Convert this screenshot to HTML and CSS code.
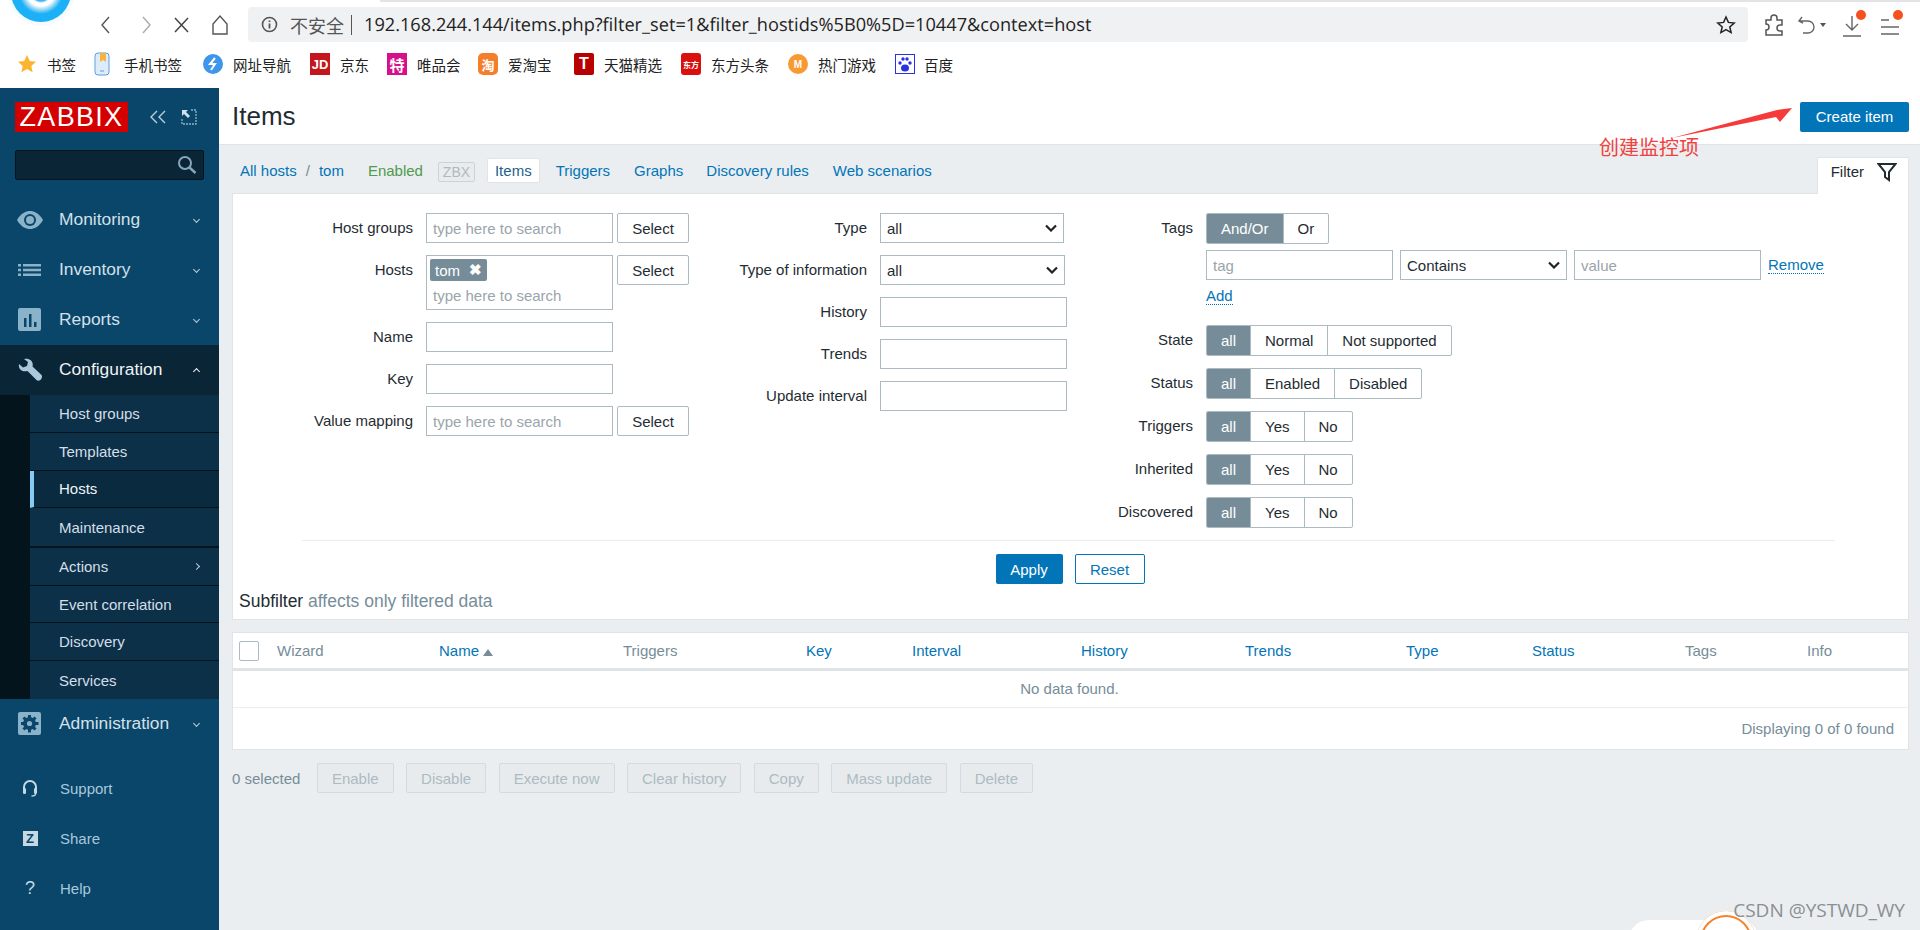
FILE: index.html
```html
<!DOCTYPE html>
<html>
<head>
    <meta charset="utf-8">
    <title>Items</title>
    <link rel="stylesheet" href="styles.css">
</head>
<body>
    <div class="browser">
        <div class="tabstrip"><span class="tab-grey"></span></div>
        <div class="favicon"></div>
        <div class="toolbar">
            <svg class="tb-icon back" width="18" height="24" viewBox="0 0 18 24"><path d="M12 4 5 12l7 8" fill="none" stroke="#555" stroke-width="1.4"/></svg>
            <svg class="tb-icon forward" width="18" height="24" viewBox="0 0 18 24"><path d="M6 4l7 8-7 8" fill="none" stroke="#aaa" stroke-width="1.4"/></svg>
            <svg class="tb-icon stop" width="18" height="24" viewBox="0 0 18 24"><path d="M2 5l13 14M15 5 2 19" fill="none" stroke="#444" stroke-width="1.5"/></svg>
            <svg class="tb-icon home" width="20" height="24" viewBox="0 0 20 24"><path d="M3 11 10 3l7 8v10H3z" fill="none" stroke="#555" stroke-width="1.4"/></svg>
            <div class="address">
                <svg class="info-icon" width="17" height="17" viewBox="0 0 17 17"><circle cx="8.5" cy="8.5" r="7" fill="none" stroke="#555" stroke-width="1.6"/><path d="M8.5 7.5v5M8.5 4.5v1.6" stroke="#555" stroke-width="1.8"/></svg>
                <span class="insecure">不安全</span>
                <span class="addr-sep"></span>
                <span class="url">192.168.244.144/items.php?filter_set=1&amp;filter_hostids%5B0%5D=10447&amp;context=host</span>
                <svg class="addr-star" width="20" height="20" viewBox="0 0 20 20"><path d="M10 2l2.4 5.4 5.8.6-4.4 3.9 1.3 5.7L10 14.7l-5.1 2.9 1.3-5.7L1.8 8l5.8-.6z" fill="none" stroke="#222" stroke-width="1.5"/></svg>
            </div>
            <div class="tb-right">
                <svg width="22" height="24" viewBox="0 0 22 24"><path d="M8 5a3 3 0 0 1 6 0v2h5v5h-2a3 3 0 0 0 0 6h2v4H3v-5a3 3 0 0 0 0-6V7h5z" fill="none" stroke="#555" stroke-width="1.5"/></svg>
                <svg class="undo" width="20" height="24" viewBox="0 0 20 24"><path d="M5 4 2 8l4 2M2 8h9a6 6 0 0 1 0 12H6" fill="none" stroke="#666" stroke-width="1.4"/></svg>
                <span class="caret"></span>
                <div class="dl">
                    <svg width="22" height="26" viewBox="0 0 22 26"><path d="M11 4v14M5 12l6 6 6-6M2 24h18" fill="none" stroke="#666" stroke-width="1.4"/></svg>
                    <span class="dot"></span>
                </div>
                <div class="menu">
                    <svg width="22" height="26" viewBox="0 0 22 26"><path d="M3 8h8M3 15h18M3 22h18" fill="none" stroke="#666" stroke-width="1.5"/></svg>
                    <span class="dot"></span>
                </div>
            </div>
        </div>
        <div class="bookmarks">
            <span class="bm bm-star"><svg class="bm-ico" width="20" height="20" viewBox="0 0 20 20"><path d="M10 1l2.7 6 6.3.7-4.7 4.3 1.3 6.3L10 15l-5.600 3.300L5.700 12 1 7.700 7.300 7z" fill="#fbb42d"/></svg>书签</span>
            <span class="bm bm-phone"><svg class="bm-ico" width="18" height="24" viewBox="0 0 18 24"><rect x="2" y="1" width="14" height="22" rx="3" fill="#dcecfb" stroke="#5a9fe0"/><path d="M7 1h6v9l-3-2-3 2z" fill="#f5b342"/><path d="M7 19h4" stroke="#5a9fe0"/></svg>手机书签</span>
            <span class="bm bm-nav"><svg class="bm-ico" width="20" height="22" viewBox="0 0 20 22"><circle cx="10" cy="11" r="10" fill="#3d95ec"/><path d="M12 5 7 11h5l-4 6" fill="none" stroke="#fff" stroke-width="2"/></svg>网址导航</span>
            <span class="bm bm-jd"><span class="sq jd">JD</span>京东</span>
            <span class="bm bm-vip"><span class="sq te">特</span>唯品会</span>
            <span class="bm bm-tao"><span class="sq tao">淘</span>爱淘宝</span>
            <span class="bm bm-tm"><span class="sq tm">T</span>天猫精选</span>
            <span class="bm bm-df"><span class="sq df">东方</span>东方头条</span>
            <span class="bm bm-game"><span class="sq rm">M</span>热门游戏</span>
            <span class="bm"><svg class="bm-ico" width="20" height="20" viewBox="0 0 20 20"><rect x="0.500" y="0.500" width="19" height="19" fill="#fff" stroke="#2932e1"/><ellipse cx="10" cy="14" rx="4" ry="3.500" fill="#2932e1"/><circle cx="5" cy="9" r="1.700" fill="#2932e1"/><circle cx="15" cy="9" r="1.700" fill="#2932e1"/><circle cx="8" cy="5" r="1.700" fill="#2932e1"/><circle cx="12" cy="5" r="1.700" fill="#2932e1"/></svg>百度</span>
        </div>
    </div>

    <div class="app">
        <aside class="sidebar">
            <div class="logo-row">
                <div class="logo">ZABBIX</div>
                <svg class="collapse" width="18" height="16" viewBox="0 0 18 16"><path d="M8 2 2 8l6 6M16 2l-6 6 6 6" fill="none" stroke="#b8d0de" stroke-width="1.400"/></svg>
                <svg class="kiosk" width="16" height="16" viewBox="0 0 16 16"><path d="M10 1h5v14H1V9" fill="none" stroke="#8fb2c7" stroke-width="1.300" stroke-dasharray="2 1"/><path d="M1 1h6L5 3l4 4-2 2-4-4-2 2z" fill="#cfe0ea"/></svg>
            </div>
            <div class="search-box">
                <svg width="20" height="20" viewBox="0 0 20 20"><circle cx="8" cy="8" r="6" fill="none" stroke="#85a8bb" stroke-width="2"/><path d="M12.500 12.500 18.500 18" stroke="#85a8bb" stroke-width="2.400"/></svg>
            </div>
            <nav class="menu-main">
                <a class="nav-row">
                    <span class="nav-icon"><svg width="28" height="20" viewBox="0 0 28 20"><path d="M1 10C5 3 10 1 14 1s9 2 13 9c-4 7-9 9-13 9S5 17 1 10z" fill="#8ab2c9"/><circle cx="14" cy="10" r="6" fill="#0a466a"/><circle cx="14" cy="10" r="4" fill="#8ab2c9"/></svg></span>
                    <span class="nav-label">Monitoring</span><span class="chev down"></span>
                </a>
                <a class="nav-row">
                    <span class="nav-icon"><svg width="24" height="14" viewBox="0 0 24 14"><path d="M0 1h3v2.400H0zM0 5.800h3v2.400H0zM0 10.600h3V13H0zM5 1h18v2.400H5zM5 5.800h18v2.400H5zM5 10.600h18V13H5z" fill="#8ab2c9"/></svg></span>
                    <span class="nav-label">Inventory</span><span class="chev down"></span>
                </a>
                <a class="nav-row">
                    <span class="nav-icon"><svg width="24" height="24" viewBox="0 0 24 24"><rect width="23" height="23" rx="2" fill="#8ab2c9"/><path d="M6 10h2.500v9H6zM11 6h2.500v13H11zM16 14h2.500v5H16z" fill="#0a466a"/></svg></span>
                    <span class="nav-label">Reports</span><span class="chev down"></span>
                </a>
                <a class="nav-row active">
                    <span class="nav-icon"><svg width="24" height="24" viewBox="0 0 24 24"><path d="M1 6 5 9.500 9 8l1-4-4-3c5-1.500 10 2 8.500 7.500L23.500 17c1 1 .5 2.500-.5 4.500-2 1.500-3.500 1.500-4.500.5l-9-9C4.500 14.500 0 11 1 6z" fill="#a9c8dc"/></svg></span>
                    <span class="nav-label">Configuration</span><span class="chev up"></span>
                </a>
                <div class="submenu">
                    <a class="sub-row">Host groups</a>
                    <a class="sub-row">Templates</a>
                    <a class="sub-row current">Hosts</a>
                    <a class="sub-row thick">Maintenance</a>
                    <a class="sub-row">Actions<span class="chev right"></span></a>
                    <a class="sub-row">Event correlation</a>
                    <a class="sub-row">Discovery</a>
                    <a class="sub-row last">Services</a>
                </div>
                <a class="nav-row">
                    <span class="nav-icon"><svg width="24" height="24" viewBox="0 0 24 24"><rect width="23" height="23" rx="2" fill="#8ab2c9"/><path d="M11.500 3v17.500M3 11.500h17.500M5.500 5.500l12 12M17.500 5.500l-12 12" stroke="#0a466a" stroke-width="3"/><circle cx="11.500" cy="11.500" r="6.500" fill="#0a466a"/><circle cx="11.500" cy="11.500" r="2.600" fill="#8ab2c9"/></svg></span>
                    <span class="nav-label">Administration</span><span class="chev down"></span>
                </a>
            </nav>
            <div class="menu-user">
                <a class="user-row"><span class="user-icon"><svg width="16" height="18" viewBox="0 0 16 18"><path d="M2 10V8a6 6 0 0 1 12 0v2" fill="none" stroke="#c5d9e5" stroke-width="2"/><rect x="1" y="9" width="3" height="6" rx="1.300" fill="#c5d9e5"/><rect x="12" y="9" width="3" height="6" rx="1.300" fill="#c5d9e5"/><path d="M13.500 15c0 2-2 2-4 2" fill="none" stroke="#c5d9e5" stroke-width="1.300"/></svg></span>Support</a>
                <a class="user-row"><span class="user-icon"><span class="share-z">Z</span></span>Share</a>
                <a class="user-row"><span class="user-icon"><span class="help-q">?</span></span>Help</a>
            </div>
        </aside>

        <main class="content">
            <header class="page-head">
                <h1>Items</h1>
                <button class="btn-primary create">Create item</button>
            </header>

            <div class="host-nav">
                <a class="link first">All hosts</a>
                <span class="slash">/</span>
                <a class="link">tom</a>
                <span class="enabled">Enabled</span>
                <span class="zbx">ZBX</span>
                <a class="link tab-active">Items</a>
                <a class="link triggers">Triggers</a>
                <a class="link graphs">Graphs</a>
                <a class="link rules">Discovery rules</a>
                <a class="link web">Web scenarios</a>
                <div class="filter-tab">Filter
                    <svg width="20" height="20" viewBox="0 0 20 20"><path d="M1.500 2h17l-6.500 8v8l-4-3v-5z" fill="none" stroke="#1f2c33" stroke-width="2"/></svg>
                </div>
            </div>

            <section class="filter">
                <div class="filter-cols">
                    <div class="fcol fcol-1">
                        <label>Host groups</label>
                        <div class="with-select"><input class="w187" placeholder="type here to search"><button class="btn-alt">Select</button></div>
                        <label>Hosts</label>
                        <div class="with-select">
                            <div class="multi"><span class="chip">tom <b>✖</b></span><span class="ph">type here to search</span></div>
                            <button class="btn-alt">Select</button>
                        </div>
                        <label>Name</label>
                        <div><input class="w187"></div>
                        <label>Key</label>
                        <div><input class="w187"></div>
                        <label>Value mapping</label>
                        <div class="with-select"><input class="w187" placeholder="type here to search"><button class="btn-alt">Select</button></div>
                    </div>
                    <div class="fcol fcol-2">
                        <label>Type</label>
                        <div><select class="s184"><option>all</option></select></div>
                        <label>Type of information</label>
                        <div><select class="s185"><option>all</option></select></div>
                        <label>History</label>
                        <div><input class="w187"></div>
                        <label>Trends</label>
                        <div><input class="w187"></div>
                        <label>Update interval</label>
                        <div><input class="w187"></div>
                    </div>
                    <div class="fcol fcol-3">
                        <label>Tags</label>
                        <div class="seg"><span class="on">And/Or</span><span>Or</span></div>
                        <span></span>
                        <div class="tag-row">
                            <input class="w187" placeholder="tag">
                            <select class="s167"><option>Contains</option></select>
                            <input class="w187" placeholder="value">
                            <a class="dotted">Remove</a>
                        </div>
                        <span></span>
                        <div class="add-row"><a class="dotted">Add</a></div>
                        <label>State</label>
                        <div class="seg"><span class="on">all</span><span>Normal</span><span>Not supported</span></div>
                        <label>Status</label>
                        <div class="seg"><span class="on">all</span><span>Enabled</span><span>Disabled</span></div>
                        <label>Triggers</label>
                        <div class="seg"><span class="on">all</span><span>Yes</span><span>No</span></div>
                        <label>Inherited</label>
                        <div class="seg"><span class="on">all</span><span>Yes</span><span>No</span></div>
                        <label>Discovered</label>
                        <div class="seg"><span class="on">all</span><span>Yes</span><span>No</span></div>
                    </div>
                </div>
                <div class="filter-actions">
                    <button class="btn-primary apply">Apply</button>
                    <button class="btn-reset">Reset</button>
                </div>
                <div class="subfilter">Subfilter <span>affects only filtered data</span></div>
            </section>

            <section class="list">
                <div class="list-head">
                    <span><i class="check"></i></span>
                    <span class="muted">Wizard</span>
                    <a class="link">Name<i class="sort-up"></i></a>
                    <span class="muted">Triggers</span>
                    <a class="link">Key</a>
                    <a class="link">Interval</a>
                    <a class="link">History</a>
                    <a class="link">Trends</a>
                    <a class="link">Type</a>
                    <a class="link">Status</a>
                    <span class="muted">Tags</span>
                    <span class="muted">Info</span>
                </div>
                <div class="no-data">No data found.</div>
                <div class="list-foot">Displaying 0 of 0 found</div>
            </section>

            <div class="actions">
                <span class="selected">0 selected</span>
                <button>Enable</button>
                <button>Disable</button>
                <button>Execute now</button>
                <button>Clear history</button>
                <button>Copy</button>
                <button>Mass update</button>
                <button>Delete</button>
            </div>
        </main>
    </div>

    <!-- things pasted over the screenshot -->
    <svg class="arrow" width="130" height="40" viewBox="0 0 130 40"><path d="M0 30 105 2 120 0 108 14 104 9z" fill="#f63a3a"/></svg>
    <div class="note">创建监控项</div>
    <div class="float-pill"></div>
    <div class="float-ring"></div>
    <div class="watermark">CSDN @YSTWD_WY</div>
</body>
</html>
```

FILE: styles.css
```css
* {
    box-sizing: border-box;
}

html, body {
    margin: 0;
    height: 930px;
    overflow: hidden;
}

body {
    position: relative;
    background: #ebeef0;
    font-family: 'Liberation Sans', Arial, sans-serif;
    font-size: 15px;
    color: #1f2c33;
}

a {
    text-decoration: none;
}

/* browser chrome */
.browser {
    position: relative;
    height: 88px;
    background: #fff;
    overflow: hidden;
}

.tabstrip {
    display: flex;
    height: 2px;
    padding-left: 380px;
}

.tab-grey {
    flex: 1;
    background: #e4e4e4;
}

.favicon {
    position: absolute;
    left: 11px;
    top: -38px;
    width: 60px;
    height: 60px;
    border-radius: 50%;
    background: radial-gradient(circle at 50% 50%, #3fb4ee 0 9px, #fff 11px 14px, #8fd6f7 18px, #1cb0f6 22px);
    box-shadow: 0 0 0 4px #f6fbfd;
}

.toolbar {
    display: flex;
    align-items: center;
    height: 40px;
    padding: 5px 0 0 0;
}

.tb-icon {
    flex: none;
}

.back { margin-left: 97px; }
.forward { margin-left: 22px; }
.stop { margin-left: 18px; }
.home { margin-left: 19px; }

.address {
    display: flex;
    align-items: center;
    width: 1500px;
    height: 35px;
    margin-left: 18px;
    padding-left: 13px;
    background: #f0f1f3;
    border-radius: 4px;
    font-family: 'Noto Sans CJK SC', 'Liberation Sans', sans-serif;
}

.insecure {
    margin-left: 12px;
    font-size: 18px;
    color: #555;
}

.addr-sep {
    width: 1px;
    height: 20px;
    margin: 0 12px 0 7px;
    background: #555;
}

.url {
    font-family: 'Open Sans', sans-serif;
    font-size: 18.200px;
    text-rendering: geometricPrecision;
    color: #222;
    white-space: nowrap;
}

.addr-star {
    margin-left: auto;
    margin-right: 12px;
}

.tb-right {
    display: flex;
    align-items: center;
    margin-left: 15px;
}

.undo { margin-left: 12px; }

.caret {
    width: 0;
    height: 0;
    margin: 0 0 0 3px;
    border-left: 3px solid transparent;
    border-right: 3px solid transparent;
    border-top: 4px solid #555;
}

.dl, .menu {
    position: relative;
    height: 26px;
}

.dl { margin-left: 15px; }
.menu { margin-left: 15px; }

.dot {
    position: absolute;
    top: -2px;
    right: -3px;
    width: 10px;
    height: 10px;
    border-radius: 50%;
    background: #f4511e;
}

.bookmarks {
    display: flex;
    align-items: center;
    height: 44px;
    padding-left: 17px;
    font-family: 'Noto Sans CJK SC', sans-serif;
    font-size: 14.500px;
    color: #222;
}

.bm {
    display: flex;
    align-items: center;
    flex: none;
    white-space: nowrap;
}

.bm-star { width: 76px; }
.bm-phone { width: 110px; }
.bm-nav { width: 107px; }
.bm-jd { width: 77px; }
.bm-vip { width: 91px; }
.bm-tao { width: 96px; }
.bm-tm { width: 107px; }
.bm-df { width: 107px; }
.bm-game { width: 107px; }

.bm-star .bm-ico { margin-right: 10px; }
.bm-phone .bm-ico { margin-right: 13px; }
.bm-nav .bm-ico { margin-right: 10px; }

.bm-ico {
    flex: none;
    margin-right: 9px;
}

.sq {
    display: flex;
    align-items: center;
    justify-content: center;
    flex: none;
    width: 20px;
    height: 22px;
    margin-right: 10px;
    color: #fff;
    font-size: 12px;
    font-weight: bold;
}

.jd { background: #c4161c; font-family: 'Liberation Sans', sans-serif; font-size: 13px; }
.te { background: #d6108a; font-size: 15px; }
.tao { background: #f57e2b; border-radius: 5px; font-size: 13px; }
.tm { background: #b80000; border-radius: 2px; font-family: 'Liberation Sans', sans-serif; font-size: 16px; }
.df { background: #d9100e; border-radius: 3px; font-size: 8px; }
.rm { background: #f79a33; border-radius: 50%; height: 20px; font-size: 10px; font-family: 'Liberation Sans', sans-serif; }

/* page */
.app {
    display: flex;
    height: 842px;
}

.sidebar {
    display: flex;
    flex-direction: column;
    flex: none;
    width: 219px;
    background: #0a466a;
}

.logo-row {
    display: flex;
    align-items: center;
    height: 62px;
    padding: 0 0 4px 15px;
}

.logo {
    width: 113px;
    height: 30px;
    background: #d40000;
    color: #fff;
    font-size: 27px;
    line-height: 30px;
    letter-spacing: 1.300px;
    text-align: center;
}

.collapse { margin-left: 21px; }
.kiosk { margin-left: 14px; }

.search-box {
    display: flex;
    align-items: center;
    justify-content: flex-end;
    width: 189px;
    height: 30px;
    margin-left: 15px;
    padding-right: 6px;
    background: #092536;
    border: 1px solid #03141d;
    border-radius: 2px;
}

.menu-main {
    margin-top: 15px;
}

.nav-row {
    display: flex;
    align-items: center;
    height: 50px;
    font-size: 17.400px;
    color: #d3e0e9;
}

.nav-row.active {
    background: #0a2536;
    color: #eef3f6;
}

.nav-icon {
    display: flex;
    justify-content: center;
    flex: none;
    width: 59px;
}

.nav-label {
    flex: 1;
    padding-bottom: 1px;
}

.chev {
    flex: none;
    width: 5px;
    height: 5px;
    margin-right: 20px;
    border-right: 1.300px solid #b9cfdc;
    border-bottom: 1.300px solid #b9cfdc;
}

.chev.down { transform: rotate(45deg); margin-top: -2px; }
.chev.up { transform: rotate(-135deg); margin-top: 3px; border-color: #eef3f6; }
.chev.right { transform: rotate(-45deg); margin-left: auto; }

.submenu {
    height: 304px;
    padding-left: 30px;
    background: #03141d;
}

.sub-row {
    display: flex;
    align-items: center;
    height: 37.800px;
    padding-left: 29px;
    background: #0d3049;
    border-bottom: 1px solid #03141d;
    color: #d3dfe7;
}

.sub-row.current {
    padding-left: 25px;
    background: #0a2a3f;
    border-left: 4px solid #86cbf5;
    color: #eef3f6;
}

.sub-row.thick {
    height: 39.500px;
    border-bottom-width: 2px;
}

.sub-row.last {
    border-bottom: 0;
}

.menu-user {
    margin-top: 14px;
}

.user-row {
    display: flex;
    align-items: center;
    height: 50px;
    color: #a9c8dc;
}

.user-icon {
    display: flex;
    justify-content: center;
    flex: none;
    width: 60px;
}

.share-z {
    display: block;
    width: 15px;
    height: 15px;
    background: #c5d9e5;
    color: #0a466a;
    font-size: 13px;
    font-weight: bold;
    line-height: 15px;
    text-align: center;
}

.help-q {
    color: #c5d9e5;
    font-size: 18px;
}

.content {
    flex: 1;
    min-width: 0;
    padding: 0 11px 0 13px;
}

.page-head {
    display: flex;
    align-items: center;
    justify-content: space-between;
    height: 57px;
    margin: 0 -11px 0 -13px;
    padding: 0 11px 0 13px;
    background: #fff;
    border-bottom: 1px solid #dfe4e7;
}

h1 {
    margin: 0;
    font-size: 26px;
    font-weight: normal;
}

button {
    font-family: inherit;
    font-size: 15px;
}

.btn-primary {
    height: 30px;
    background: #0275b8;
    border: 0;
    border-radius: 2px;
    color: #fff;
}

.create {
    width: 109px;
    margin-top: 1px;
}

.link {
    color: #0275b8;
}

.host-nav {
    display: flex;
    align-items: center;
    height: 48px;
    padding-top: 2px;
    position: relative;
}

.first { margin-left: 8px; }
.slash { margin-left: 9px; color: #76899a; }
.slash + .link { margin-left: 9px; }
.enabled { margin-left: 24px; color: #4e9a4e; }

.zbx {
    width: 37px;
    height: 20px;
    margin: 3px 0 0 15px;
    background: #e9ebec;
    border: 1px solid #ccd3d7;
    border-radius: 2px;
    color: #acbbc2;
    line-height: 18px;
    text-align: center;
    font-size: 14px;
}

.tab-active {
    margin-left: 12px;
    padding: 0 7px;
    height: 25px;
    line-height: 23px;
    background: #fff;
    border: 1px solid #dfe4e7;
    border-radius: 2px;
    color: #1f5f8b;
}

.triggers { margin-left: 16px; }
.graphs { margin-left: 24px; }
.rules { margin-left: 23px; }
.web { margin-left: 24px; }

.filter-tab {
    display: flex;
    align-items: center;
    gap: 13px;
    height: 37px;
    margin: 9px 0 -1px auto;
    padding: 0 11px 8px 13px;
    position: relative;
    z-index: 1;
    background: #fff;
    border: 1px solid #dfe4e7;
    border-bottom: 0;
}

.filter {
    height: 427px;
    background: #fff;
    border: 1px solid #dfe4e7;
}

.filter-cols {
    position: relative;
    display: flex;
    height: 347px;
    padding-top: 19px;
}

.fcol {
    display: grid;
    flex: none;
    align-content: start;
    column-gap: 13px;
    row-gap: 12px;
}

.fcol label {
    height: 30px;
    padding-top: 6px;
    text-align: right;
    white-space: nowrap;
}

.fcol-1 {
    width: 481px;
    grid-template-columns: 180px auto;
}

.fcol-2 {
    width: 353px;
    grid-template-columns: 153px auto;
}

.fcol-3 {
    grid-template-columns: 126px auto;
}

.with-select {
    display: flex;
    gap: 4px;
    align-items: flex-start;
}

input, select {
    height: 30px;
    margin: 0;
    padding: 0 6px;
    background: #fff;
    border: 1px solid #acbbc2;
    border-radius: 0;
    font-family: inherit;
    font-size: 15px;
    color: #1f2c33;
    outline: none;
}

select {
    appearance: none;
    padding-right: 24px;
    background: #fff url("data:image/svg+xml,%3Csvg xmlns='http://www.w3.org/2000/svg' width='12' height='8'%3E%3Cpath d='M1 1.500l5 5 5-5' fill='none' stroke='%23222' stroke-width='2.200'/%3E%3C/svg%3E") no-repeat right 6px center;
}

input::placeholder, .ph {
    color: #9aa5ab;
}

.w187 { width: 187px; }
.s184 { width: 184px; }
.s185 { width: 185px; }
.s167 { width: 167px; }

.btn-alt {
    width: 72px;
    height: 30px;
    background: #fff;
    border: 1px solid #acbbc2;
    border-radius: 2px;
    color: #1f2c33;
}

.multi {
    display: flex;
    flex-direction: column;
    align-items: flex-start;
    width: 187px;
    height: 55px;
    padding: 3px 3px;
    border: 1px solid #acbbc2;
}

.chip {
    height: 22px;
    padding: 0 5px;
    background: #768d99;
    border-radius: 2px;
    color: #fff;
    line-height: 22px;
}

.chip b {
    margin-left: 5px;
    font-size: 15px;
    vertical-align: 1px;
}

.ph {
    margin: 6px 0 0 3px;
}

.seg {
    display: inline-flex;
    justify-self: start;
    height: 31px;
    border: 1px solid #acbbc2;
    border-radius: 2px;
    background: #fff;
    overflow: hidden;
}

.seg span {
    padding: 0 14px;
    line-height: 29px;
    border-left: 1px solid #acbbc2;
}

.seg span:first-child {
    border-left: 0;
}

.seg .on {
    background: #768d99;
    color: #fff;
}

.tag-row {
    display: flex;
    align-items: center;
    gap: 7px;
    margin-top: -6px;
    white-space: nowrap;
}

.dotted {
    color: #0275b8;
    border-bottom: 1px dotted #0275b8;
    line-height: 16px;
}

.add-row {
    height: 21px;
    margin-top: -5px;
    margin-bottom: 5px;
}

.filter-cols::after {
    content: "";
    position: absolute;
    left: 69px;
    right: 73px;
    bottom: 0;
    border-bottom: 1px solid #ebeef0;
}

.filter-actions {
    display: flex;
    justify-content: center;
    gap: 12px;
    padding: 13px 0 0 0;
    margin-left: -1px;
}

.apply {
    width: 67px;
}

.btn-reset {
    width: 70px;
    height: 30px;
    background: #fff;
    border: 1px solid #0275b8;
    border-radius: 2px;
    color: #0275b8;
}

.subfilter {
    margin: 7px 0 0 6px;
    font-size: 17.500px;
}

.subfilter span {
    color: #768d99;
}

.list {
    margin-top: 12px;
    background: #fff;
    border: 1px solid #dfe4e7;
}

.list-head {
    display: grid;
    grid-template-columns: 44px 162px 184px 183px 106px 169px 164px 161px 126px 153px 122px auto;
    align-items: center;
    height: 38px;
    border-bottom: 3px solid #dfe4e7;
}

.muted {
    color: #768d99;
}

.check {
    display: block;
    width: 20px;
    height: 20px;
    margin-left: 6px;
    border: 1px solid #acbbc2;
    border-radius: 2px;
}

.sort-up {
    display: inline-block;
    margin-left: 4px;
    border-left: 5px solid transparent;
    border-right: 5px solid transparent;
    border-bottom: 7px solid #768d99;
}

.no-data {
    height: 37px;
    padding-right: 2px;
    line-height: 35px;
    text-align: center;
    color: #768d99;
    border-bottom: 1px solid #ebeef0;
}

.list-foot {
    height: 41px;
    padding: 0 14px 0 0;
    line-height: 41px;
    text-align: right;
    color: #768d99;
}

.actions {
    display: flex;
    align-items: center;
    gap: 12.500px;
    margin-top: 13px;
    color: #768d99;
}

.selected {
    margin-right: 4px;
}

.actions button {
    height: 30px;
    padding: 0 14px;
    background: #e8ebed;
    border: 1px solid #d5dadd;
    border-radius: 2px;
    color: #acbbc2;
}

/* overlays */
.arrow {
    position: absolute;
    left: 1672px;
    top: 108px;
}

.note {
    position: absolute;
    left: 1599px;
    top: 132px;
    font-family: 'Noto Sans CJK SC', sans-serif;
    font-size: 20px;
    color: #f23f3f;
}

.float-pill {
    position: absolute;
    left: 1629px;
    top: 920px;
    width: 130px;
    height: 40px;
    background: #fff;
    border-radius: 20px;
}

.float-ring {
    position: absolute;
    left: 1696px;
    top: 911px;
    width: 60px;
    height: 60px;
    background: #fff;
    border-radius: 50%;
    box-shadow: inset 0 0 0 4px #fff, inset 0 0 0 6px #f5812a;
}

.watermark {
    position: absolute;
    right: 15px;
    top: 897px;
    font-family: 'Open Sans', sans-serif;
    font-size: 19px;
    color: #8a8f93;
}
```
